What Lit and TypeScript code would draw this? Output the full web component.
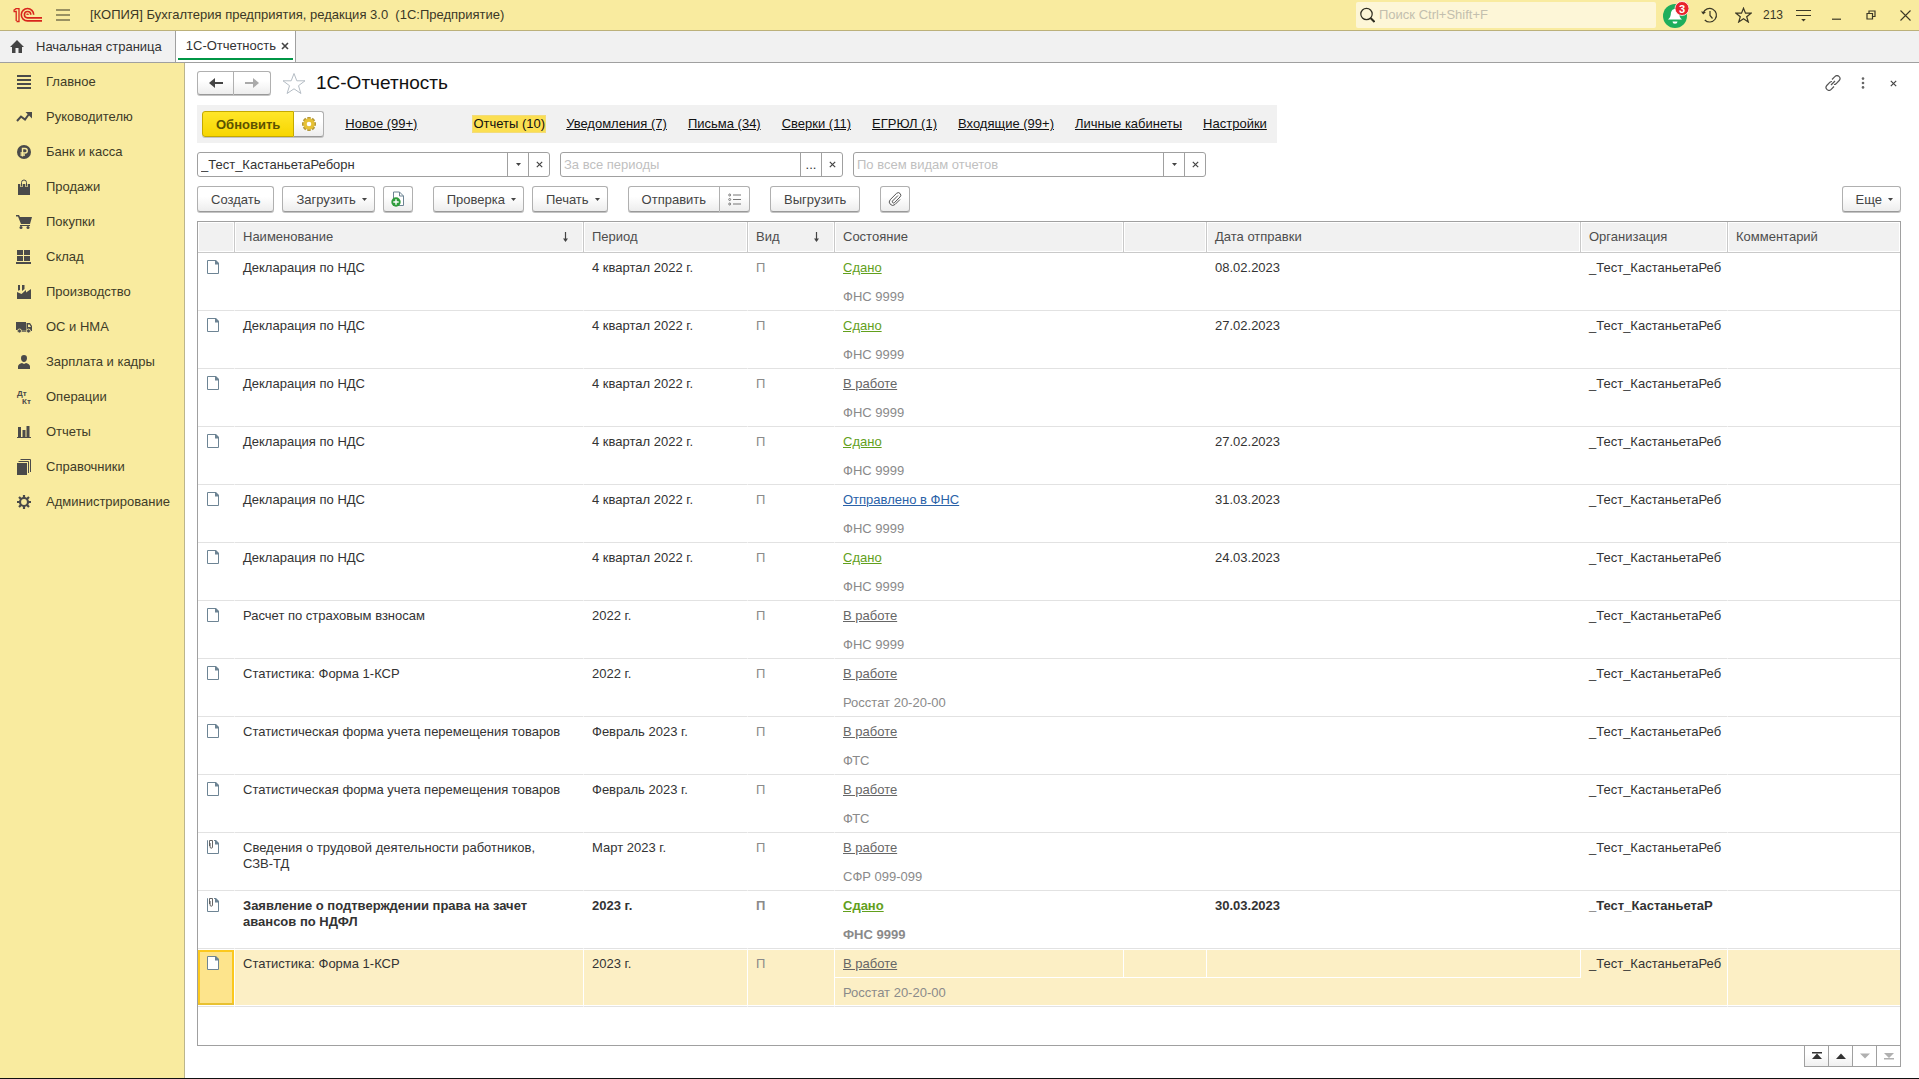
import { LitElement, html, svg, css, nothing } from "lit";
import { customElement, property, state } from "lit/decorators.js";
import { classMap } from "lit/directives/class-map.js";

type Status = "done" | "work" | "sent";

interface Report {
  name: string;
  period: string;
  status: Status;
  office: string;
  date?: string;
  attached?: boolean;
  bold?: boolean;
  org?: string;
}

const STATUS_TEXT: Record<Status, string> = {
  done: "Сдано",
  work: "В работе",
  sent: "Отправлено в ФНС",
};

const VAT = "Декларация по НДС";
const Q4 = "4 квартал 2022 г.";
const FNS = "ФНС 9999";
const MOVES = "Статистическая форма учета перемещения товаров";
const FEB = "Февраль 2023 г.";

const REPORTS: Report[] = [
  { name: VAT, period: Q4, status: "done", office: FNS, date: "08.02.2023" },
  { name: VAT, period: Q4, status: "done", office: FNS, date: "27.02.2023" },
  { name: VAT, period: Q4, status: "work", office: FNS },
  { name: VAT, period: Q4, status: "done", office: FNS, date: "27.02.2023" },
  { name: VAT, period: Q4, status: "sent", office: FNS, date: "31.03.2023" },
  { name: VAT, period: Q4, status: "done", office: FNS, date: "24.03.2023" },
  { name: "Расчет по страховым взносам", period: "2022 г.", status: "work", office: FNS },
  { name: "Статистика: Форма 1-КСР", period: "2022 г.", status: "work", office: "Росстат 20-20-00" },
  { name: MOVES, period: FEB, status: "work", office: "ФТС" },
  { name: MOVES, period: FEB, status: "work", office: "ФТС" },
  { name: "Сведения о трудовой деятельности работников, СЗВ-ТД", period: "Март 2023 г.", status: "work", office: "СФР 099-099", attached: true },
  { name: "Заявление о подтверждении права на зачет авансов по НДФЛ", period: "2023 г.", status: "done", office: FNS, date: "30.03.2023", attached: true, bold: true, org: "_Тест_КастаньетаР" },
  { name: "Статистика: Форма 1-КСР", period: "2023 г.", status: "work", office: "Росстат 20-20-00" },
];

const ICONS = {
  main: svg`<path d="M1 1h14v2H1zM1 5h14v2H1zM1 9h14v2H1zM1 13h14v2H1z" fill="#4a4a4a"/>`,
  lead: svg`<path d="M1 12 5 7.500 9 10.500 13 5" fill="none" stroke="#4a4a4a" stroke-width="2"/><path d="M9.500 3H16v6.500z" fill="#4a4a4a"/>`,
  bank: svg`<circle cx="8" cy="8" r="7" fill="#4a4a4a"/><path d="M6.500 12.500V4.500H9a2.200 2.200 0 0 1 0 4.500H4.500M4.500 11H9" fill="none" stroke="#f9eb9f" stroke-width="1.400"/>`,
  sales: svg`<path d="M2 5h12v11H2z" fill="#4a4a4a"/><path d="M5.500 8V3.500a2.500 2.500 0 0 1 5 0V8" fill="none" stroke="#f9eb9f" stroke-width="2.400"/><path d="M5.500 7.500V3.500a2.500 2.500 0 0 1 5 0v4" fill="none" stroke="#4a4a4a" stroke-width="1"/>`,
  buy: svg`<path d="M0 1h3l1 2h12l-2 7H5L2 2.500H0z" fill="#4a4a4a"/><path d="M4 11.500h10" stroke="#4a4a4a"/><circle cx="5" cy="13.500" r="1.500" fill="#4a4a4a"/><circle cx="12" cy="13.500" r="1.500" fill="#4a4a4a"/>`,
  stock: svg`<path d="M1 1h6v5H1zM8 1h6v5H8zM1 7h6v5H1zM8 7h6v5H8zM0 13h15v2H0z" fill="#4a4a4a"/>`,
  factory: svg`<path d="M1 15V8l4.500 2L10 6v2.500L15 5v10zM2 1h2v5l-2 .8zM6 1h2.500v4L6 7z" fill="#4a4a4a"/>`,
  truck: svg`<path d="M0 3h10v8H0zM10.500 4H14l2 3v5h-5.500z" fill="#4a4a4a"/><path d="M12 5.500h1.500L15 8h-3z" fill="#f9eb9f"/><path d="M1 12h14" stroke="#4a4a4a" stroke-width="1.400"/><circle cx="3.500" cy="12" r="2" fill="#4a4a4a" stroke="#f9eb9f" stroke-width=".8"/><circle cx="12.500" cy="12" r="2" fill="#4a4a4a" stroke="#f9eb9f" stroke-width=".8"/>`,
  person: svg`<path d="M8 1a3 3.300 0 0 1 3 3.300C11 6.500 9.600 8 8 8S5 6.500 5 4.300A3 3.300 0 0 1 8 1zM2 15v-2.500C2 10.500 4 9.500 6 9l2 1 2-1c2 .500 4 1.500 4 3.500V15z" fill="#4a4a4a"/>`,
  ops: svg`<text x="1" y="7" font-size="8" font-weight="700" fill="#4a4a4a">Дт</text><text x="6" y="15" font-size="8" font-weight="700" fill="#4a4a4a">Кт</text>`,
  chart: svg`<path d="M2 3h3v10H2zM6.500 6h3v7h-3zM10.500 2h3v11h-3zM1 13h14v1H1z" fill="#4a4a4a"/>`,
  books: svg`<path d="M1 4h10v12H1z" fill="#4a4a4a"/><path d="M2.500 2.500h10V14M4.500.500h10V13" fill="none" stroke="#4a4a4a"/>`,
  gear: svg`<path d="M8 1v14M1 8h14M3 3l10 10M13 3 3 13" stroke="#4a4a4a" stroke-width="2.200"/><circle cx="8" cy="8" r="4" fill="#f9eb9f" stroke="#4a4a4a" stroke-width="2.200"/>`,
};

const MENU: [string, keyof typeof ICONS][] = [
  ["Главное", "main"],
  ["Руководителю", "lead"],
  ["Банк и касса", "bank"],
  ["Продажи", "sales"],
  ["Покупки", "buy"],
  ["Склад", "stock"],
  ["Производство", "factory"],
  ["ОС и НМА", "truck"],
  ["Зарплата и кадры", "person"],
  ["Операции", "ops"],
  ["Отчеты", "chart"],
  ["Справочники", "books"],
  ["Администрирование", "gear"],
];

const SECTIONS = [
  "Отчеты (10)",
  "Уведомления (7)",
  "Письма (34)",
  "Сверки (11)",
  "ЕГРЮЛ (1)",
  "Входящие (99+)",
  "Личные кабинеты",
  "Настройки",
];

const caret = html`<svg class="caret" width="5" height="3" viewBox="0 0 5 3" aria-hidden="true"><path d="M0 0h5L2.500 3z" fill="#444"/></svg>`;
const smallCross = html`<svg width="7" height="7" viewBox="0 0 7 7" aria-hidden="true"><path d="m.8.800 5.400 5.400M6.200.800.800 6.200" stroke="#444" stroke-width="1.200"/></svg>`;
const sortArrow = html`<svg class="sort" width="7" height="12" viewBox="0 0 7 12" aria-hidden="true"><path d="M3.500 1v9" stroke="#444" stroke-width="1.200"/><path d="M1 7.500h5L3.500 11z" fill="#444"/></svg>`;

const base = css`
  * {
    box-sizing: border-box;
  }
  button,
  input {
    font: inherit;
    color: inherit;
    margin: 0;
    padding: 0;
    border: 0;
    background: none;
  }
  svg {
    display: block;
    flex: none;
  }
  a {
    color: inherit;
  }
`;

@customElement("app-titlebar")
export class AppTitlebar extends LitElement {
  static styles = [
    base,
    css`
      :host {
        display: flex;
        align-items: center;
        height: 31px;
        padding-left: 13px;
        background: #f9eb9f;
        border-bottom: 1px solid #bcb17a;
        color: #3b3826;
      }
      .title {
        margin-left: 20px;
        flex: 1;
        white-space: nowrap;
        overflow: hidden;
      }
      .burger {
        margin-left: 14px;
      }
      .search {
        display: flex;
        align-items: center;
        gap: 4px;
        width: 300px;
        height: 26px;
        padding: 0 4px;
        background: #fdf6d7;
        border-radius: 2px;
      }
      .search input {
        flex: 1;
        min-width: 0;
        outline: none;
      }
      .search input::placeholder {
        color: #c3bfae;
        opacity: 1;
      }
      .tools {
        display: flex;
        align-items: center;
        margin-left: 2px;
      }
      .tools button {
        display: grid;
        place-items: center;
        width: 34px;
        height: 30px;
      }
      .tools .close {
        width: 28px;
        margin-left: 3px;
      }
      .count {
        font-size: 12px;
        width: 26px;
        text-align: center;
      }
    `,
  ];

  render() {
    return html`
      <svg width="29" height="16" viewBox="0 0 29 16" role="img" aria-label="1С" fill="none" stroke="#d8251c">
        <path d="M.5 4.500H3.200V14M.5 3.500 3 1.700H6V14.500H3.500" stroke-width="1.300" />
        <path d="M20.700 7.700A6.200 6.200 0 1 0 14.500 13.900H29" stroke-width="1.600" />
        <path d="M17.800 7.700A3.200 3.200 0 1 0 14.500 10.900H29" stroke-width="1.600" />
        <path d="M13.500 7.500a1.200 1.200 0 0 1 2 .2" stroke-width="1.200" />
      </svg>
      <button class="burger" aria-label="Главное меню">
        <svg width="14" height="12" viewBox="0 0 14 12"><path d="M0 1h14M0 6h14M0 11h14" stroke="#3b3826" stroke-width="1.200" /></svg>
      </button>
      <span class="title">[КОПИЯ] Бухгалтерия предприятия, редакция 3.0&nbsp; (1С:Предприятие)</span>
      <label class="search">
        <svg width="15" height="16" viewBox="0 0 15 16" fill="none" stroke="#2e2c20"><circle cx="6.500" cy="7" r="5.700" stroke-width="1.200" /><path d="m10.500 11 4 4" stroke-width="2" /></svg>
        <input type="search" placeholder="Поиск Ctrl+Shift+F" aria-label="Поиск" />
      </label>
      <div class="tools">
        <button aria-label="Уведомления">
          <svg width="28" height="28" viewBox="0 0 28 28">
            <circle cx="14" cy="15" r="12" fill="#1fae5c" />
            <path d="M14 8c2.800 0 3.900 2.200 4.200 5.200.3 2.800 1.300 3.800 2.800 5.300H7c1.500-1.500 2.500-2.500 2.800-5.300C10.100 10.200 11.200 8 14 8zM11.500 20.500h5a2.500 2.200 0 0 1-5 0z" fill="#fff" />
            <circle cx="21" cy="7.500" r="7" fill="#e8232c" stroke="#fff" stroke-width=".8" />
            <text x="21" y="11.500" font-size="11" font-weight="700" fill="#fff" text-anchor="middle">3</text>
          </svg>
        </button>
        <button aria-label="История">
          <svg width="17" height="16" viewBox="0 0 17 16" fill="none" stroke="#3b3826" stroke-width="1.200"><path d="M2.200 6A6.800 6.800 0 1 1 3.800 13M9 4V8.500l2.500 3" /><path d="m0 4.500 2.200 3L5 5z" fill="#3b3826" stroke="none" /></svg>
        </button>
        <button aria-label="Избранное">
          <svg width="17" height="16" viewBox="0 0 17 16" fill="none" stroke="#3b3826" stroke-width="1.200"><path d="m8.500 1.200 2 5H16l-4.300 3.500 1.600 5.300-4.800-3.200L3.700 15l1.600-5.300L1 6.200h5.500z" /></svg>
        </button>
        <span class="count">213</span>
        <button aria-label="Сервис и настройки">
          <svg width="15" height="14" viewBox="0 0 15 14"><path d="M0 2.500h15M0 7.500h15" stroke="#3b3826" stroke-width="1.200" /><path d="M5.200 11h4.600l-2.300 2.500z" fill="#3b3826" /></svg>
        </button>
        <button aria-label="Свернуть">
          <svg width="10" height="10" viewBox="0 0 10 10"><path d="M0 9.200h9" stroke="#3b3826" stroke-width="1.200" /></svg>
        </button>
        <button aria-label="Развернуть">
          <svg width="10" height="10" viewBox="0 0 10 10" fill="none" stroke="#3b3826" stroke-width="1.200"><path d="M1 3.500h5.500V9H1zM3 3.500V1h6v5.500H6.500" /></svg>
        </button>
        <button class="close" aria-label="Закрыть">
          <svg width="11" height="11" viewBox="0 0 11 11"><path d="m.5.500 10 10M10.500.500l-10 10" stroke="#3b3826" stroke-width="1.100" /></svg>
        </button>
      </div>
    `;
  }
}

@customElement("app-sidebar")
export class AppSidebar extends LitElement {
  static styles = [
    base,
    css`
      :host {
        display: block;
        width: 185px;
        flex: none;
        padding-top: 1px;
        background: #f9eb9f;
        border-right: 1px solid #bcb58c;
        color: #403c28;
      }
      a {
        display: flex;
        align-items: center;
        gap: 14px;
        height: 35px;
        padding-left: 16px;
        text-decoration: none;
        white-space: nowrap;
      }
    `,
  ];

  render() {
    return html`<nav>
      ${MENU.map(
        ([label, icon]) => html`<a href="#"><svg width="16" height="16" viewBox="0 0 16 16" aria-hidden="true">${ICONS[icon]}</svg>${label}</a>`
      )}
    </nav>`;
  }
}

@customElement("app-filter")
export class AppFilter extends LitElement {
  @property() label = "";
  @property() value = "";
  @property() placeholder = "";
  @property({ type: Boolean }) dots = false;

  static styles = [
    base,
    css`
      :host {
        display: flex;
        height: 25px;
        background: #fff;
        border: 1px solid #a0a0a0;
        border-radius: 3px;
        color: #333;
      }
      input {
        flex: 1;
        min-width: 0;
        padding: 0 3px;
        outline: none;
      }
      input::placeholder {
        color: #bfbfbf;
        opacity: 1;
      }
      button {
        display: grid;
        place-items: center;
        width: 21px;
        border-left: 1px solid #a0a0a0;
      }
    `,
  ];

  render() {
    return html`
      <input type="text" aria-label=${this.label} .value=${this.value} placeholder=${this.placeholder} />
      <button aria-label="Выбрать">${this.dots ? "..." : caret}</button>
      <button aria-label="Очистить">${smallCross}</button>
    `;
  }
}

@customElement("report-table")
export class ReportTable extends LitElement {
  @state() private selected = REPORTS.length - 1;

  static styles = [
    base,
    css`
      :host {
        display: block;
        flex: 1;
        border: 1px solid #a0a0a0;
        background: #fff;
        color: #333;
      }
      table {
        width: 100%;
        table-layout: fixed;
        border-collapse: separate;
        border-spacing: 0;
      }
      .c-icon {
        width: 37px;
      }
      .c-name {
        width: 349px;
      }
      .c-period {
        width: 164px;
      }
      .c-kind {
        width: 87px;
      }
      .c-state {
        width: 289px;
      }
      .c-flag {
        width: 83px;
      }
      .c-date {
        width: 374px;
      }
      .c-org {
        width: 147px;
      }
      th {
        height: 31px;
        padding: 0 8px;
        font-weight: 400;
        text-align: left;
        color: #4d4d4d;
        background: #f1f1f1;
        border-right: 1px solid #c9c9c9;
        border-bottom: 1px solid #c9c9c9;
        box-shadow: inset 0 0 0 1px #fff;
      }
      th:last-child {
        border-right: 0;
      }
      .head {
        display: flex;
        align-items: center;
        justify-content: space-between;
      }
      .sort {
        margin-right: 6px;
      }
      td {
        height: 29px;
        padding: 7px 8px 0;
        line-height: 16px;
        vertical-align: top;
        white-space: nowrap;
        overflow: hidden;
        border-right: 1px solid #fff;
        border-bottom: 1px solid #e2e2e2;
      }
      td:last-child {
        border-right: 0;
      }
      .wrap {
        white-space: normal;
        padding-right: 20px;
      }
      .top {
        border-bottom-color: #fff;
      }
      .doc {
        padding-left: 9px;
      }
      .kind,
      .office {
        color: #8a8a8a;
      }
      td.office {
        border-right: 0;
      }
      .bold td {
        font-weight: 700;
      }
      .done {
        color: #62a01c;
      }
      .work {
        color: #666;
      }
      .sent {
        color: #2a62a8;
      }
      .selected td {
        background: #fcefc5;
        box-shadow: inset 0 1px 0 #fff, inset 0 -1px 0 #fff;
      }
      .selected .top {
        box-shadow: inset 0 1px 0 #fff;
      }
      .selected .office {
        box-shadow: inset 0 -1px 0 #fff;
      }
      .selected .doc {
        background: #fde48c;
        box-shadow: inset 0 1px 0 #fff, inset 0 -1px 0 #fff, inset 0 3px 0 #fbc81e, inset 0 -3px 0 #e8c132, inset 2px 0 0 #fbc81e,
          inset -2px 0 0 #fbc81e;
      }
    `,
  ];

  private doc(attached = false) {
    return html`<svg width="12" height="15" viewBox="0 0 12 15" aria-hidden="true">
      <path d="M.5 .5h7.500L11.500 4v9.500H.5z" fill="#fff" stroke="#6d8494" />
      <path d="M8 0h1l3 3v1.500H8z" fill="#6d8494" />
      ${attached
        ? svg`<path d="M1 0h6v8H1z" fill="#fff"/><path d="M2.500 6V.500h3V7a1.200 1.200 0 0 1-2.400 0V3" fill="none" stroke="#555" stroke-width=".9"/>`
        : nothing}
    </svg>`;
  }

  private row(r: Report, i: number) {
    const cls = classMap({ bold: !!r.bold, selected: i === this.selected });
    return html`<tbody class=${cls} @click=${() => (this.selected = i)}>
      <tr>
        <td class="doc" rowspan="2">${this.doc(r.attached)}</td>
        <td class="wrap" rowspan="2">${r.name}</td>
        <td rowspan="2">${r.period}</td>
        <td class="kind" rowspan="2">П</td>
        <td class="top"><a class=${r.status} href="#">${STATUS_TEXT[r.status]}</a></td>
        <td class="top"></td>
        <td class="top">${r.date ?? ""}</td>
        <td rowspan="2">${r.org ?? "_Тест_КастаньетаРеб"}</td>
        <td rowspan="2"></td>
      </tr>
      <tr>
        <td class="office" colspan="3">${r.office}</td>
      </tr>
    </tbody>`;
  }

  render() {
    return html`<table>
      <colgroup>
        <col class="c-icon" />
        <col class="c-name" />
        <col class="c-period" />
        <col class="c-kind" />
        <col class="c-state" />
        <col class="c-flag" />
        <col class="c-date" />
        <col class="c-org" />
        <col />
      </colgroup>
      <thead>
        <tr>
          <th></th>
          <th><div class="head">Наименование${sortArrow}</div></th>
          <th>Период</th>
          <th><div class="head">Вид${sortArrow}</div></th>
          <th>Состояние</th>
          <th></th>
          <th>Дата отправки</th>
          <th>Организация</th>
          <th>Комментарий</th>
        </tr>
      </thead>
      ${REPORTS.map((r, i) => this.row(r, i))}
    </table>`;
  }
}

@customElement("app-root")
export class AppRoot extends LitElement {
  static styles = [
    base,
    css`
      :host {
        display: flex;
        flex-direction: column;
        min-height: 100vh;
        box-sizing: border-box;
        border-bottom: 1px solid #111;
        background: #fff;
        font: 13px/16px "Liberation Sans", Arial, sans-serif;
        color: #333;
      }
      .tabs {
        display: flex;
        height: 32px;
        background: #f1f1f1;
        border-bottom: 1px solid #a0a0a0;
      }
      .tab {
        display: flex;
        align-items: center;
        text-decoration: none;
        white-space: nowrap;
      }
      .home {
        gap: 12px;
        padding: 0 13px 0 10px;
        border-right: 1px solid #a0a0a0;
      }
      .current {
        gap: 5px;
        padding: 2px 4px 0 8px;
        margin: 0 2px;
        border-bottom: 2px solid #009646;
        height: 29px;
      }
      .slot {
        background: #fff;
        border-right: 1px solid #a0a0a0;
      }
      .body {
        display: flex;
        flex: 1;
      }
      main {
        display: flex;
        flex-direction: column;
        flex: 1;
        min-width: 0;
        padding: 0 18px 11px 12px;
      }
      .heading {
        display: flex;
        align-items: center;
        height: 40px;
        margin-bottom: 2px;
      }
      .btn {
        display: flex;
        align-items: center;
        justify-content: center;
        height: 26px;
        padding: 1px 13px 0;
        white-space: nowrap;
        color: #444;
        background: linear-gradient(#fff 40%, #ededed);
        border: 1px solid #b0b0b0;
        border-bottom-color: #999;
        box-shadow: 0 1px 0 #c4c4c4;
        border-radius: 3px;
      }
      .drop {
        gap: 6px;
        padding-right: 7px;
      }
      .square {
        width: 30px;
        padding: 0;
      }
      .pair {
        display: flex;
      }
      .pair .btn:first-child {
        border-top-right-radius: 0;
        border-bottom-right-radius: 0;
      }
      .pair .btn:last-child {
        border-left: 0;
        border-top-left-radius: 0;
        border-bottom-left-radius: 0;
      }
      .nav .btn {
        width: 37px;
        height: 24px;
        padding: 0;
      }
      .star {
        margin: 0 10px 0 11px;
      }
      h1 {
        flex: 1;
        margin: 0;
        font-size: 19px;
        line-height: 24px;
        font-weight: 400;
        color: #111;
      }
      .form-tools {
        display: flex;
        align-items: center;
        margin-right: -7px;
      }
      .form-tools button {
        display: grid;
        place-items: center;
        width: 30px;
        height: 24px;
      }
      .strip {
        display: flex;
        align-items: center;
        align-self: flex-start;
        gap: 21px;
        height: 38px;
        padding: 0 10px 0 5px;
        background: #f1f1f1;
        color: #111;
        white-space: nowrap;
      }
      .strip .refresh {
        font-weight: 700;
        color: #5c5200;
        background: linear-gradient(#ffe629, #f7d600);
        border-color: #c4a900;
      }
      .new {
        margin-right: 35px;
      }
      .here {
        text-decoration: none;
        background: #fbdf52;
        box-shadow: 0 0 0 1px #f3dc7a;
      }
      .filters {
        display: flex;
        gap: 10px;
        margin-top: 9px;
      }
      .wide {
        width: 353px;
      }
      .mid {
        width: 283px;
      }
      .toolbar {
        display: flex;
        align-items: center;
        gap: 20px;
        margin: 9px 0;
      }
      .group {
        display: flex;
        gap: 8px;
      }
      .more {
        margin-left: auto;
      }
      .pager {
        display: flex;
        align-self: flex-end;
        border-left: 1px solid #a0a0a0;
      }
      .pager button {
        display: grid;
        place-items: center;
        width: 24px;
        height: 21px;
        background: linear-gradient(#fff 40%, #f0f0f0);
        border-right: 1px solid #a0a0a0;
        border-bottom: 1px solid #a0a0a0;
      }
      .pager button:disabled {
        background: #fff;
      }
    `,
  ];

  render() {
    return html`
      <app-titlebar></app-titlebar>
      <div class="tabs">
        <a class="tab home" href="#">
          <svg width="14" height="14" viewBox="0 0 14 14" aria-hidden="true"><path d="M7 0l7 7h-2v6H8.500V8h-3v5H2V7H0z" fill="#444" /></svg>
          Начальная страница
        </a>
        <div class="slot">
          <div class="tab current">
            <span>1С-Отчетность</span>
            <button aria-label="Закрыть вкладку">
              <svg width="8" height="8" viewBox="0 0 8 8"><path d="m1 1 6 6M7 1 1 7" stroke="#444" stroke-width="1.600" /></svg>
            </button>
          </div>
        </div>
      </div>
      <div class="body">
        <app-sidebar></app-sidebar>
        <main>
          <div class="heading">
            <div class="pair nav">
              <button class="btn" aria-label="Назад">
                <svg width="14" height="12" viewBox="0 0 14 12"><path d="M14 6H4" stroke="#444" stroke-width="2" /><path d="M0 6 6 1v10z" fill="#444" /></svg>
              </button>
              <button class="btn" aria-label="Вперед">
                <svg width="14" height="12" viewBox="0 0 14 12"><path d="M0 6h10" stroke="#aaa" stroke-width="2" /><path d="M14 6 8 1v10z" fill="#aaa" /></svg>
              </button>
            </div>
            <button class="star" aria-label="Добавить в избранное">
              <svg width="24" height="23" viewBox="0 0 24 23" fill="none" stroke="#b4bcc4"><path d="m12 1.500 2.800 7.300H23l-6.500 4.900 2.400 7.800-6.900-4.700-6.900 4.700 2.400-7.800L1 8.800h8.200z" /></svg>
            </button>
            <h1>1С-Отчетность</h1>
            <div class="form-tools">
              <button aria-label="Получить ссылку">
                <svg width="16" height="16" viewBox="0 0 16 16" fill="none" stroke="#555" stroke-width="1.200"><path d="m7 4.500 2.800-2.800a2.700 2.700 0 0 1 4.400 3.800L11 8.800a2.700 2.700 0 0 1-2 .7M9 11.500l-2.800 2.800a2.700 2.700 0 0 1-4.400-3.800L5 7.200a2.700 2.700 0 0 1 2-.7M6 10l4-4" /></svg>
              </button>
              <button aria-label="Меню формы">
                <svg width="4" height="12" viewBox="0 0 4 12" fill="#666"><circle cx="2" cy="1.600" r="1.300" /><circle cx="2" cy="6" r="1.300" /><circle cx="2" cy="10.400" r="1.300" /></svg>
              </button>
              <button aria-label="Закрыть форму">${smallCross}</button>
            </div>
          </div>

          <div class="strip">
            <div class="pair">
              <button class="btn refresh">Обновить</button>
              <button class="btn square" aria-label="Настройка обновления">
                <svg width="16" height="16" viewBox="0 0 16 16"><path d="M8 1v14M1 8h14M3 3l10 10M13 3 3 13" stroke="#b5993a" stroke-width="3.400" /><circle cx="8" cy="8" r="4" fill="#fff" stroke="#e6c136" stroke-width="3.400" /></svg>
              </button>
            </div>
            <a class="new" href="#">Новое (99+)</a>
            ${SECTIONS.map((s, i) => html`<a class=${classMap({ here: i === 0 })} href="#">${s}</a>`)}
          </div>

          <div class="filters">
            <app-filter class="wide" label="Организация" value="_Тест_КастаньетаРеборн"></app-filter>
            <app-filter class="mid" label="Период" placeholder="За все периоды" dots></app-filter>
            <app-filter class="wide" label="Вид отчета" placeholder="По всем видам отчетов"></app-filter>
          </div>

          <div class="toolbar">
            <div class="group">
              <button class="btn">Создать</button>
              <button class="btn drop">Загрузить${caret}</button>
              <button class="btn square" aria-label="Загрузить из файла">
                <svg width="14" height="17" viewBox="0 0 14 17"><path d="M2.500 1h6l4 4v9.500h-10z" fill="#fff" stroke="#6d8494" /><path d="M8.500 1v4h4" fill="none" stroke="#6d8494" /><circle cx="5" cy="11" r="4.700" fill="#2f9c3c" /><path d="M5 8.300v5.400M2.300 11h5.400" stroke="#fff" stroke-width="1.400" /></svg>
              </button>
            </div>
            <div class="group">
              <button class="btn drop">Проверка${caret}</button>
              <button class="btn drop">Печать${caret}</button>
            </div>
            <div class="pair">
              <button class="btn">Отправить</button>
              <button class="btn square" aria-label="Список отправки">
                <svg width="13" height="13" viewBox="0 0 13 13" fill="none" stroke="#777"><path d="M5 2h8M5 6.500h8M5 11h8" /><circle cx="1.700" cy="2" r="1" /><circle cx="1.700" cy="6.500" r="1" /><circle cx="1.700" cy="11" r="1" /></svg>
              </button>
            </div>
            <button class="btn">Выгрузить</button>
            <button class="btn square" aria-label="Присоединенные файлы">
              <svg width="14" height="14" viewBox="0 0 14 14" fill="none" stroke="#555"><path d="M10 3.500 4.500 9a1.300 1.300 0 0 0 1.800 1.800L12 5a2.500 2.500 0 0 0-3.500-3.600L2.200 7.700a3.400 3.400 0 0 0 4.800 4.800L12 7.500" /></svg>
            </button>
            <button class="btn drop more">Еще${caret}</button>
          </div>

          <report-table></report-table>
          <div class="pager">
            <button aria-label="В начало"><svg width="12" height="8" viewBox="0 0 12 8" fill="#333"><path d="M1 0h10v1.500H1zM6 1.500 11 7H1z" /></svg></button>
            <button aria-label="Вверх"><svg width="12" height="8" viewBox="0 0 12 8" fill="#333"><path d="M6 1.500 11 7H1z" /></svg></button>
            <button aria-label="Вниз" disabled><svg width="12" height="8" viewBox="0 0 12 8" fill="#b0b0b0"><path d="M6 6.500 11 1.500H1z" /></svg></button>
            <button aria-label="В конец" disabled><svg width="12" height="8" viewBox="0 0 12 8" fill="#b0b0b0"><path d="M6 6 11 1H1zM1 6h10v1.500H1z" /></svg></button>
          </div>
        </main>
      </div>
    `;
  }
}
